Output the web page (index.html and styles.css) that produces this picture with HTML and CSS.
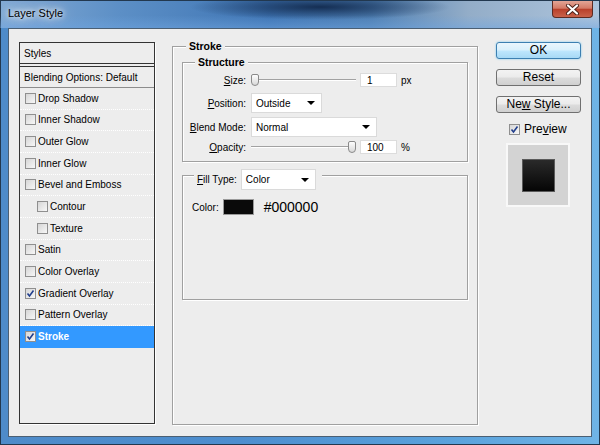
FILE: index.html
```html
<!DOCTYPE html>
<html lang="en">
<head>
<meta charset="UTF-8" />
<title>Layer Style</title>
<link rel="stylesheet" href="styles.css">
</head>
<body>

<div class="window">
  <div class="titlebar">
    <span class="title">Layer Style</span>
    <div class="close">
      <svg width="17" height="11" viewBox="0 0 17 11">
        <path d="M4 1.5 L13 9.5 M13 1.5 L4 9.5" stroke="#4a2018" stroke-width="4" stroke-linecap="round"/>
        <path d="M4 1.5 L13 9.5 M13 1.5 L4 9.5" stroke="#fff" stroke-width="2.2" stroke-linecap="round"/>
      </svg>
    </div>
  </div>

  <div class="client">
    <div class="styles-list">
      <div class="list-head">Styles</div>
      <div class="list-blend">Blending Options: Default</div>
      <div class="row"><span class="cb"></span>Drop Shadow</div>
      <div class="row"><span class="cb"></span>Inner Shadow</div>
      <div class="row"><span class="cb"></span>Outer Glow</div>
      <div class="row"><span class="cb"></span>Inner Glow</div>
      <div class="row"><span class="cb"></span>Bevel and Emboss</div>
      <div class="row sub"><span class="cb"></span>Contour</div>
      <div class="row sub"><span class="cb"></span>Texture</div>
      <div class="row"><span class="cb"></span>Satin</div>
      <div class="row"><span class="cb"></span>Color Overlay</div>
      <div class="row"><span class="cb checked"></span>Gradient Overlay</div>
      <div class="row"><span class="cb"></span>Pattern Overlay</div>
      <div class="row selected"><span class="cb checked"></span>Stroke</div>
    </div>

    <div class="group stroke-group">
      <div class="legend">Stroke</div>

      <div class="group structure">
        <div class="legend">Structure</div>
        <div class="form">
          <label><u>S</u>ize:</label>
          <div class="ctrl">
            <div class="slider"><div class="track"></div><div class="thumb"></div></div>
            <div class="input">1</div>
            <span class="unit">px</span>
          </div>

          <label><u>P</u>osition:</label>
          <div class="ctrl">
            <div class="select pos-select">Outside<span class="arrow"></span></div>
          </div>

          <label><u>B</u>lend Mode:</label>
          <div class="ctrl">
            <div class="select blend-select">Normal<span class="arrow"></span></div>
          </div>

          <label><u>O</u>pacity:</label>
          <div class="ctrl">
            <div class="slider"><div class="track"></div><div class="thumb at-end"></div></div>
            <div class="input">100</div>
            <span class="unit">%</span>
          </div>
        </div>
      </div>

      <div class="group fill">
        <div class="legend fill-legend">
          <label><u>F</u>ill Type:</label>
          <div class="select fill-select">Color<span class="arrow"></span></div>
        </div>
        <div class="color-row">
          <span>Color:</span>
          <span class="swatch"></span>
          <span class="hex">#000000</span>
        </div>
      </div>
    </div>

    <div class="buttons">
      <div class="btn default">OK</div>
      <div class="btn">Reset</div>
      <div class="btn">Ne<u>w</u> Style...</div>
      <div class="preview-check"><span class="cb checked"></span>Pre<u>v</u>iew</div>
      <div class="preview-box"><div class="preview-square"></div></div>
    </div>
  </div>
</div>

</body>
</html>
```

FILE: styles.css
```css
body {
  margin: 0;
  padding: 0;
  font-family: "Liberation Sans", Arial, sans-serif;
  font-size: 10px;
  color: #000;
}

/* window frame */
.window {
  width: 600px;
  height: 445px;
  box-sizing: border-box;
  display: flex;
  flex-direction: column;
  background:
    radial-gradient(ellipse 130px 13px at 320px 7px, rgba(18, 42, 78, 0.95), rgba(18, 42, 78, 0) 100%) top / 100% 28px no-repeat,
    linear-gradient(to right, #82aad4 0%, #5c8fc6 20%, #3f75b4 45%, #4f7fb2 62%, #93adc8 78%, #adc4dc 100%) top / 100% 28px no-repeat,
    linear-gradient(to right, #4e8bc9 0%, #4d8ecf 40%, #5aa2dc 75%, #6fb4e6 100%);
  box-shadow: inset 0 0 0 1px #22384f;
}

.titlebar {
  height: 28px;
  display: flex;
  align-items: flex-start;
  background: linear-gradient(to bottom, rgba(255, 255, 255, 0) 55%, rgba(110, 165, 225, 0.5) 100%);
}

.title {
  margin: 7px 0 0 8px;
  font-size: 11px;
  text-shadow: 0 0 5px #fff, 0 0 9px rgba(255, 255, 255, 0.9), 0 0 14px rgba(255, 255, 255, 0.7);
}

.close {
  margin: 1px 7px 0 auto;
  width: 41px;
  height: 17px;
  box-sizing: border-box;
  border: 1px solid #5c2a22;
  border-top: 0;
  border-radius: 0 0 4px 4px;
  background: linear-gradient(to bottom, #e3a596 0%, #d47a66 45%, #b9402b 52%, #c9624a 100%);
  display: flex;
  align-items: center;
  justify-content: center;
}

/* client area */
.client {
  flex: 1;
  margin: 0 8px 8px 8px;
  background: #ededed;
  border: 1px solid #4b5f73;
  display: flex;
  align-items: flex-start;
  padding: 13px 0 0 10px;
}

/* styles list */
.styles-list {
  width: 136px;
  height: 382px;
  box-sizing: border-box;
  border: 1px solid #333;
  box-shadow: 1px 1px 0 #fff;
}

.list-head {
  height: 24px;
  box-sizing: border-box;
  padding: 5px 0 0 4px;
  border-bottom: 4px double #333;
}

.list-blend {
  height: 21px;
  box-sizing: border-box;
  padding: 5px 0 0 4px;
  border-bottom: 1px solid #8c8c8c;
}

.row {
  height: 21.67px;
  box-sizing: border-box;
  display: flex;
  align-items: center;
  padding-left: 5px;
  border-bottom: 1px dotted #fff;
}

.row.sub {
  padding-left: 17px;
}

.row.selected {
  background: #3399ff;
  color: #fff;
  font-weight: bold;
  border-bottom-color: #3399ff;
}

.cb {
  width: 11px;
  height: 11px;
  box-sizing: border-box;
  margin-right: 2px;
  border: 1px solid #8f8f8f;
  background: linear-gradient(135deg, #d6d6d6, #f7f7f7);
  flex: none;
}

.cb.checked {
  background:
    url("data:image/svg+xml;utf8,<svg xmlns='http://www.w3.org/2000/svg' width='9' height='9'><path d='M1.5 4.5 L3.5 7 L7.5 1.5' fill='none' stroke='%23213e8c' stroke-width='1.6'/></svg>") center / 9px 9px no-repeat,
    linear-gradient(135deg, #d6d6d6, #f7f7f7);
}

/* group boxes */
.group {
  box-sizing: border-box;
  border: 1px solid #a0a0a0;
  box-shadow: 1px 1px 0 #fff, inset 1px 1px 0 #fff;
  display: flex;
  flex-direction: column;
}

.legend {
  align-self: flex-start;
  height: 12px;
  line-height: 12px;
  margin: -7px 0 0 13px;
  padding: 0 3px;
  background: #ededed;
  font-weight: bold;
  font-size: 10.5px;
}

.stroke-group {
  width: 306px;
  height: 379px;
  margin: 4px 0 0 17px;
}

.structure {
  margin: 10px 9px 0 9px;
}

.structure .legend {
  margin-left: 12px;
}

.form {
  display: grid;
  grid-template-columns: 63px 1fr;
  grid-template-rows: 20px 22px 22px 14px;
  column-gap: 5px;
  row-gap: 2px;
  margin-top: 2px;
  padding-bottom: 7px;
  align-items: center;
}

.form label {
  text-align: right;
}

.ctrl {
  display: flex;
  align-items: center;
}

.slider {
  position: relative;
  width: 105px;
  height: 14px;
  display: flex;
  align-items: center;
}

.track {
  width: 100%;
  height: 0;
  border-top: 1px solid #a2a2a2;
  border-bottom: 1px solid #fff;
}

.thumb {
  position: absolute;
  left: 0;
  top: 1px;
  width: 8px;
  height: 12px;
  box-sizing: border-box;
  border: 1px solid #8a8a8a;
  border-radius: 2px 2px 4px 4px;
  background: linear-gradient(#fdfdfd, #d9d9d9);
}

.thumb.at-end {
  left: auto;
  right: 0;
}

.input {
  width: 37px;
  height: 14px;
  box-sizing: border-box;
  margin-left: 4px;
  padding-left: 6px;
  line-height: 13px;
  background: #fff;
  border: 1px solid #dcdcdc;
}

.unit {
  margin-left: 4px;
}

.select {
  height: 20px;
  box-sizing: border-box;
  padding-left: 4px;
  display: flex;
  align-items: center;
  background: #fff;
  border: 1px solid #dadada;
}

.arrow {
  margin: 0 6px 0 auto;
  width: 0;
  height: 0;
  border-left: 4px solid transparent;
  border-right: 4px solid transparent;
  border-top: 4px solid #000;
}

.pos-select { width: 71px; }
.blend-select { width: 126px; }

.fill {
  height: 125px;
  margin: 13px 9px 0 9px;
}

.fill-legend {
  height: 21px;
  margin: -7px 0 0 11px;
  padding: 0 6px 0 3px;
  display: flex;
  align-items: center;
  font-weight: normal;
  font-size: 10px;
}

.fill-select {
  width: 75px;
  height: 21px;
  margin-left: 4px;
}

.color-row {
  margin-top: 9px;
  padding-left: 9px;
  display: flex;
  align-items: center;
}

.swatch {
  width: 31px;
  height: 16px;
  box-sizing: border-box;
  margin-left: 4px;
  background: #0a0a0a;
  border: 1px solid #9a9a9a;
}

.hex {
  margin-left: 10px;
  font-size: 14px;
}

/* right buttons */
.buttons {
  width: 85px;
  margin-left: 18px;
  display: flex;
  flex-direction: column;
  gap: 10px;
}

.btn {
  height: 17px;
  box-sizing: border-box;
  border: 1px solid #707070;
  border-radius: 3px;
  background: linear-gradient(#f3f3f3 0%, #ebebeb 48%, #dcdcdc 52%, #d0d0d0 100%);
  font-size: 12px;
  line-height: 15px;
  text-align: center;
}

.btn.default {
  border-color: #3c7fb1;
  background: linear-gradient(#eaf6fd 0%, #d9f0fc 48%, #bee6fd 52%, #a7d9f5 100%);
  box-shadow: 0 0 2px #6cc6f2;
}

.preview-check {
  margin-top: -1px;
  height: 14px;
  padding-left: 13px;
  display: flex;
  align-items: center;
  font-size: 12px;
}

.preview-check .cb {
  margin-right: 4px;
}

.preview-box {
  margin: -3px 0 0 10px;
  width: 64px;
  height: 64px;
  box-sizing: border-box;
  border: 2px solid #f8f8f8;
  background: #d3d3d3;
  display: flex;
  align-items: center;
  justify-content: center;
}

.preview-square {
  width: 33px;
  height: 33px;
  box-sizing: border-box;
  border: 1px solid #5a5a5a;
  background: linear-gradient(#2a2a2a, #050505);
}
```
